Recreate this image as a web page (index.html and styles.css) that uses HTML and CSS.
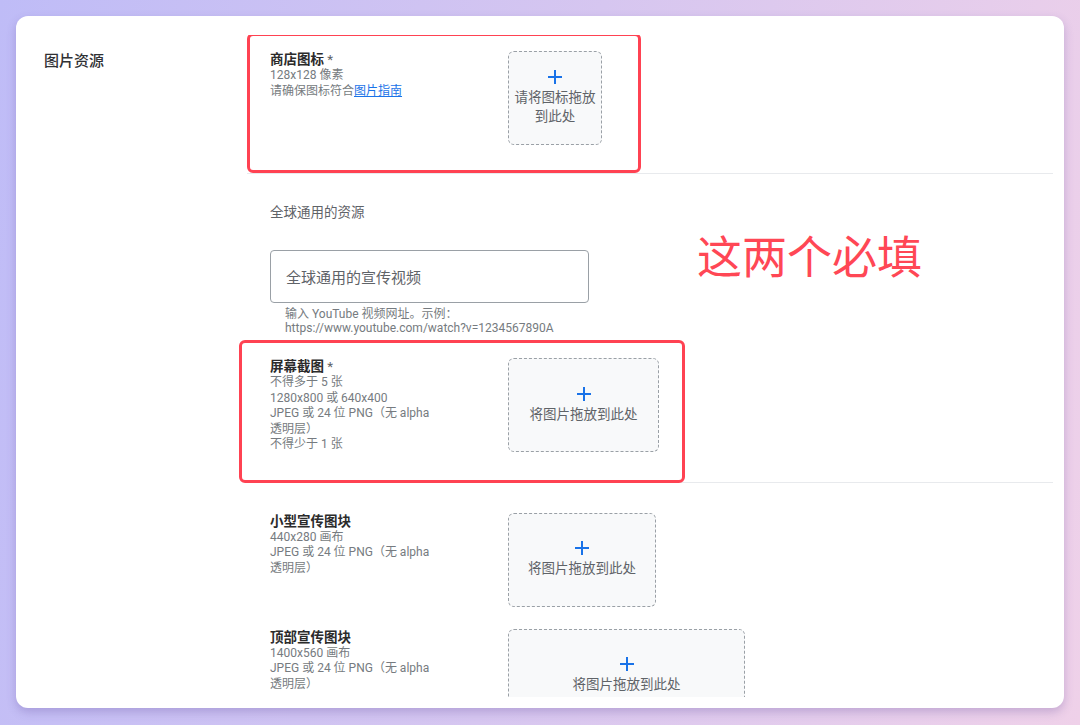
FILE: index.html
```html
<!DOCTYPE html>
<html lang="zh-CN">
<head>
<meta charset="utf-8">
<title>图片资源</title>
<link rel="stylesheet" href="styles.css">
</head>
<body>
<div class="page">
  <div class="card">
    <div class="card-inner">
      <div class="side-label">图片资源</div>
      <div class="main">
        <div class="row row-first">
          <div class="info">
            <div class="title">商店图标 <span class="req">*</span></div>
            <div class="desc">128x128 像素</div>
            <div class="desc">请确保图标符合<a class="link" href="#">图片指南</a></div>
          </div>
          <div class="drop drop-icon">
            <svg class="plus" viewBox="0 0 14 14" width="14" height="14"><path d="M7 0v14M0 7h14" stroke="#1a73e8" stroke-width="2" fill="none"/></svg>
            <span class="drop-text">请将图标拖放到此处</span>
          </div>
          <div class="mark mark-one"></div>
        </div>

        <div class="global">
          <div class="global-label">全球通用的资源</div>
          <div class="input">全球通用的宣传视频</div>
          <div class="helper">输入 YouTube 视频网址。示例：<br>https://www.youtube.com/watch?v=1234567890A</div>
          <div class="note">这两个必填</div>
        </div>

        <div class="row row-shots">
          <div class="info">
            <div class="title">屏幕截图 <span class="req">*</span></div>
            <div class="desc">不得多于 5 张</div>
            <div class="desc">1280x800 或 640x400</div>
            <div class="desc">JPEG 或 24 位 PNG（无 alpha 透明层）</div>
            <div class="desc">不得少于 1 张</div>
          </div>
          <div class="drop drop-shot">
            <svg class="plus" viewBox="0 0 14 14" width="14" height="14"><path d="M7 0v14M0 7h14" stroke="#1a73e8" stroke-width="2" fill="none"/></svg>
            <span class="drop-text">将图片拖放到此处</span>
          </div>
          <div class="mark mark-two"></div>
        </div>

        <div class="row row-small">
          <div class="info">
            <div class="title">小型宣传图块</div>
            <div class="desc">440x280 画布</div>
            <div class="desc">JPEG 或 24 位 PNG（无 alpha 透明层）</div>
          </div>
          <div class="drop drop-small">
            <svg class="plus" viewBox="0 0 14 14" width="14" height="14"><path d="M7 0v14M0 7h14" stroke="#1a73e8" stroke-width="2" fill="none"/></svg>
            <span class="drop-text">将图片拖放到此处</span>
          </div>
        </div>

        <div class="row row-top">
          <div class="info">
            <div class="title">顶部宣传图块</div>
            <div class="desc">1400x560 画布</div>
            <div class="desc">JPEG 或 24 位 PNG（无 alpha 透明层）</div>
          </div>
          <div class="drop drop-marquee">
            <svg class="plus" viewBox="0 0 14 14" width="14" height="14"><path d="M7 0v14M0 7h14" stroke="#1a73e8" stroke-width="2" fill="none"/></svg>
            <span class="drop-text">将图片拖放到此处</span>
          </div>
        </div>
      </div>
    </div>
  </div>
</div>
</body>
</html>
```
FILE: styles.css
```css
* { box-sizing: border-box; }
html, body { margin: 0; padding: 0; }
body {
  width: 1080px;
  height: 725px;
  overflow: hidden;
  background: linear-gradient(100deg, #bfbcf7 0%, #d6c6f0 50%, #efd1e9 100%);
  font-family: Roboto, "Noto Sans CJK SC", sans-serif;
  color: #202124;
}
.page { padding: 16px 16px 0 16px; }
.card {
  width: 1048px;
  height: 692px;
  background: #fff;
  border-radius: 12px;
  box-shadow: 0 4px 10px rgba(90, 70, 150, 0.28);
  padding: 19px 10px 11px 28px;
}
.card-inner {
  display: flex;
  height: 100%;
  overflow: hidden;
}
.side-label {
  width: 203px;
  flex: none;
  padding-top: 16px;
  font-size: 15px;
  line-height: 20px;
  font-weight: 500;
  color: #303134;
}
.main {
  width: 806px;
  position: relative;
}
.row {
  position: relative;
  display: flex;
  padding-left: 23px;
}
.row-first { padding-top: 16px; padding-bottom: 28px; border-bottom: 1px solid #e8eaed; }
.row-shots { padding-top: 23px; padding-bottom: 29px; border-bottom: 1px solid #e8eaed; }
.row-small { padding-top: 30px; }
.row-top { padding-top: 22px; }
.info { width: 238px; flex: none; margin-top: -1px; }
.title {
  font-size: 13.5px;
  line-height: 18px;
  font-weight: 700;
  color: #2b2b2b;
}
.req { font-weight: 400; color: #5f6368; }
.desc {
  font-size: 12px;
  line-height: 15.5px;
  color: #767b80;
  max-width: 172px;
}
.link { color: #1a73e8; text-decoration: underline; }
.drop {
  height: 94px;
  border: 1px dashed #9aa0a6;
  border-radius: 6px;
  background: #f8f9fa;
  display: flex;
  flex-direction: column;
  align-items: center;
  justify-content: center;
  gap: 4px;
  padding: 0 5px;
  text-align: center;
  flex: none;
}
.drop-icon { width: 94px; }
.drop-shot { width: 151px; }
.drop-small { width: 148px; }
.drop-marquee { width: 237px; }
.plus { display: block; }
.drop-text {
  font-size: 13.5px;
  line-height: 19px;
  color: #5f6368;
}
.global {
  position: relative;
  padding: 29px 0 0 23px;
}
.global-label {
  font-size: 13.5px;
  line-height: 18px;
  color: #5f6368;
}
.input {
  margin-top: 29px;
  width: 319px;
  height: 53px;
  border: 1px solid #9aa0a6;
  border-radius: 4px;
  padding-left: 15px;
  display: flex;
  align-items: center;
  font-size: 15px;
  color: #5f6368;
}
.helper {
  margin-top: 4px;
  padding-left: 15px;
  font-size: 12px;
  line-height: 14px;
  color: #767b80;
}
.note {
  position: absolute;
  left: 450px;
  top: 60px;
  font-size: 45px;
  line-height: 50px;
  color: #ff4755;
  font-weight: 400;
}
.mark {
  position: absolute;
  border: 3px solid #ff4252;
  border-radius: 6px;
  pointer-events: none;
}
.mark-one { left: 0; top: -2px; width: 394px; height: 140px; }
.mark-two { left: -8px; top: 5px; width: 446px; height: 143px; }
```
